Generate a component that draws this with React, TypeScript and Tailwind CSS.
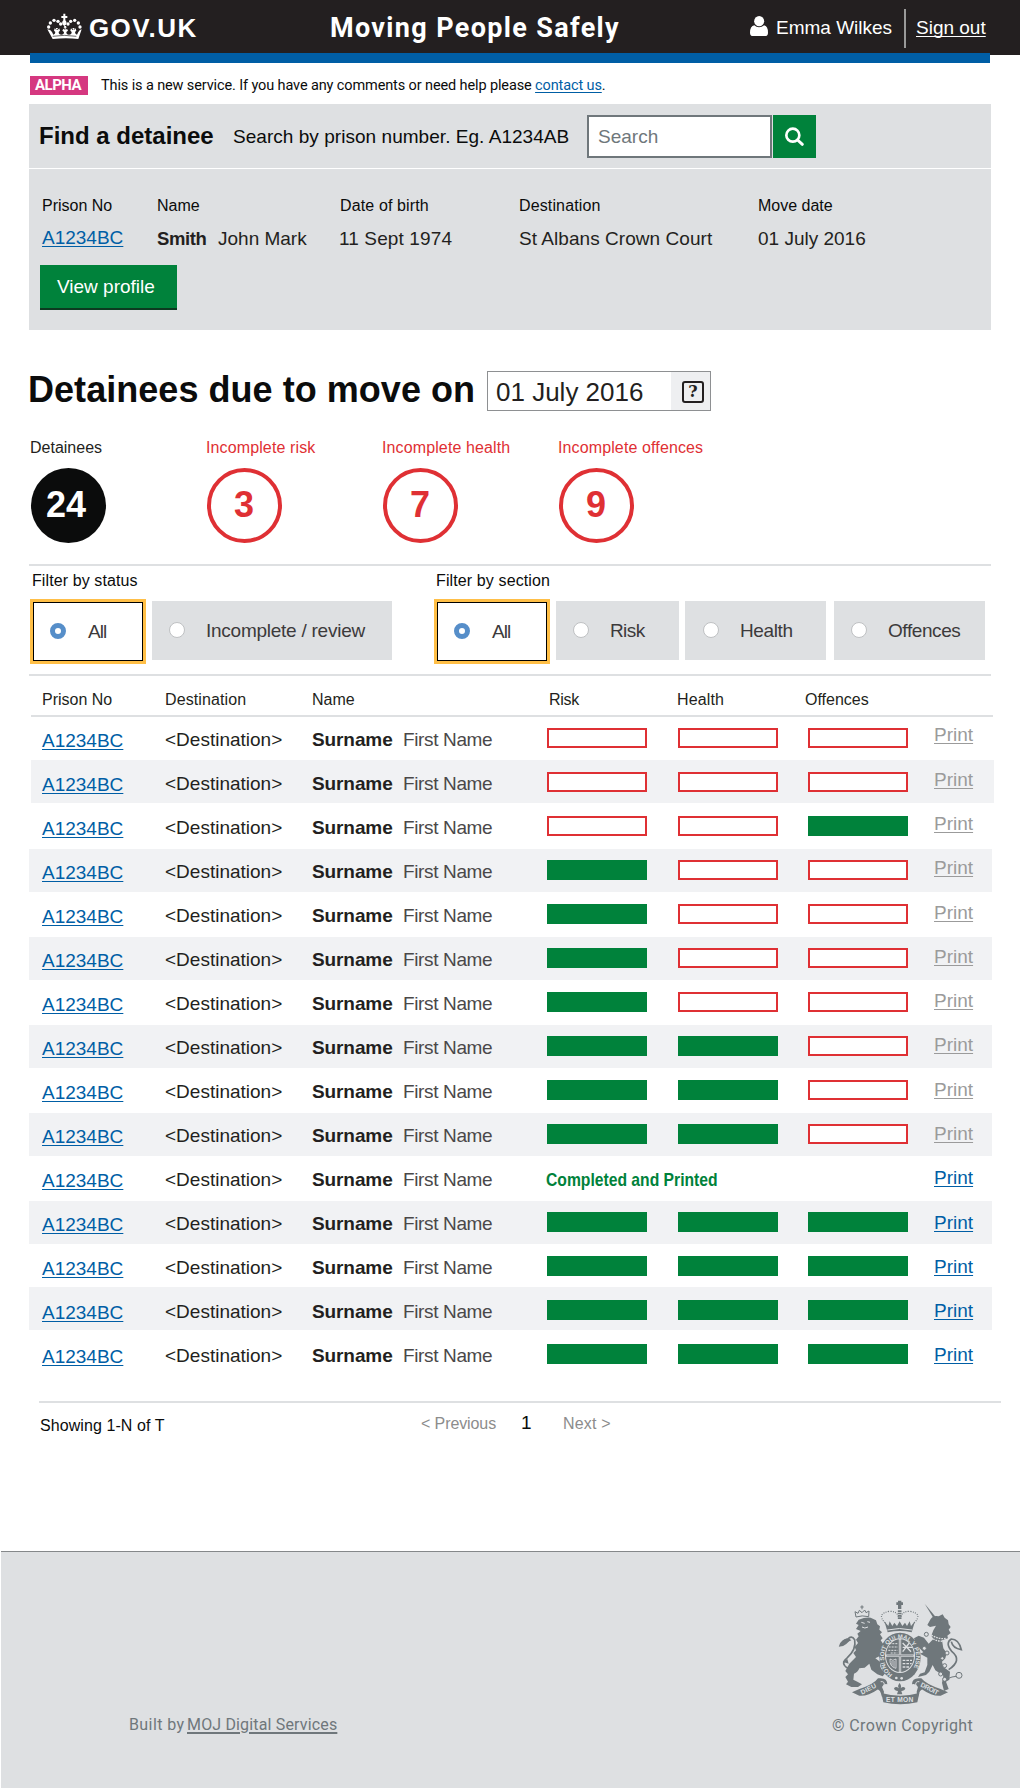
import type { ReactNode } from "react";

const GREEN_BAR = "h-5 w-[100px] bg-[#00823b]";
const RED_BAR = "h-5 w-[100px] border-2 border-[#df3034] bg-white";

const text16 = "text-[16px] leading-[17px] whitespace-pre";
const text19 = "text-[19px] leading-[21px] whitespace-pre";
const link = "text-[#005ea5] underline decoration-1 underline-offset-2";

function Crown() {
  return (
    <svg className="block h-[27px] w-9" viewBox="138 39 108 81" fill="#fff">
      <path d="M190 41h6v7h6v6h-6v7q6 5 2 13l-5 4-5-4q-4-8 2-13v-7h-6v-6h6z" />
      {[
        [146, 81],
        [151, 69],
        [162, 61],
        [174, 64],
        [182, 72],
      ].map(([x, y]) => (
        <g key={x}>
          <circle cx={x} cy={y} r="5" />
          <circle cx={386 - x} cy={y} r="5" />
        </g>
      ))}
      <path d="M142 88q10 0 14 8l4 8q6-2 6-8l-4-4 2-7 5 5h1l-3-6h7l-3 6h2l5-5 2 7-4 4q0 8 8 8t8-8l-5-4 3-6 4 4v-7h-3l2-5h5l2 5h-3v7l4-4 3 6-5 4q0 8 8 8t8-8l-4-4 2-7 5 5h2l-3-6h7l-3 6h1l5-5 2 7-4 4q0 6 6 8l4-8q4-8 10-8l-10 29q-36-5-77 0z" />
      <path d="M158 109q34-6 71 0" fill="none" stroke="#231f20" strokeWidth="2" />
    </svg>
  );
}

function UserIcon() {
  return (
    <svg className="block h-5 w-[18px]" viewBox="723 48 54 60" fill="#fff">
      <ellipse cx="750.5" cy="63.5" rx="15" ry="15.5" />
      <path d="M736 76Q723 79 723 98Q723 108 732 108H768Q777 108 777 98Q777 79 765 76Q759 82 750 82Q742 82 736 76Z" />
    </svg>
  );
}

function SearchIcon() {
  return (
    <svg className="block h-[21px] w-[21px]" viewBox="822 378 63 63" fill="none" stroke="#fff">
      <circle cx="848.5" cy="405.500" r="19.5" strokeWidth="8" />
      <path d="M863 420L877 433" strokeWidth="9" strokeLinecap="round" />
    </svg>
  );
}

function RoyalArms() {
  return (
    <svg className="block h-[108px] w-32" viewBox="55 25 384 324" fill="#6f777b">
      {/* lion */}
      <path d="M112 82l-3-16 9 5 4-9 8 7 8-8 4 8 9-5-1 17q-20-5-38 1z" fill="none" stroke="#6f777b" strokeWidth="3" />
      <path d="M130 47v12M125 52h10" stroke="#6f777b" strokeWidth="3" />
      <path d="M120 90Q140 82 156 84L172 92L176 104L184 110L182 120L190 128L184 134L192 146L186 152L194 164L188 172L200 188L196 200L186 212L182 200L170 206L184 216L184 228L188 238L200 250L192 260L176 254L158 240L152 222L138 234L122 236Q118 248 106 252L104 270L116 276L130 284L118 292L98 292L82 284L88 276L80 262L88 254L80 244L92 222L112 202L104 190L112 182L108 172L118 160L112 150L120 140L116 132L126 124L112 118L120 106L112 102Z" />
      <path d="M128 98l10 3M146 96l8 2M130 112q8 6 18 0" stroke="#dee0e2" strokeWidth="3" fill="none" />
      <path d="M88 236Q64 222 84 206Q114 180 108 150Q98 136 88 148Q70 150 64 168Q82 166 92 148" fill="none" stroke="#6f777b" strokeWidth="5" />
      <path d="M64 168Q74 146 90 146L98 152Q82 160 64 168ZM72 216L86 208L90 222Z" />
      {/* unicorn */}
      <path d="M318 42L353 84L346 88Z" />
      <path d="M326 106L336 88Q344 76 360 80L372 74L378 84L388 92L390 104L396 112L390 120L396 130L386 138L388 146L370 152L374 176L384 190L380 206L370 216L374 232L394 246L392 270L382 276L390 298L376 304L370 280L374 258L350 242L342 226L332 246L322 256L298 262L304 252L318 248L326 226L326 204L304 192L314 188L294 166L286 146L300 138L316 144L330 162L344 148L338 138L344 122L352 108L334 112Z" />
      <path d="M338 136q22 14 46 10M336 144q22 14 48 10" stroke="#dee0e2" strokeWidth="4" strokeDasharray="5 3" fill="none" />
      <path d="M390 240Q432 212 400 186Q378 160 398 148Q420 148 428 180Q402 176 398 156" fill="none" stroke="#6f777b" strokeWidth="5" />
      <g fill="#dee0e2" stroke="#6f777b" strokeWidth="3">
        <circle cx="323" cy="134" r="6" />
        <circle cx="317" cy="176" r="6" />
        <circle cx="385" cy="190" r="6" />
        <circle cx="371" cy="206" r="5" />
        <circle cx="378" cy="228" r="6" />
        <circle cx="366" cy="253" r="6" />
        <circle cx="378" cy="269" r="6" />
        <circle cx="421" cy="257" r="9" />
      </g>
      <path d="M384 268L400 262L412 260" stroke="#6f777b" strokeWidth="3" fill="none" />
      {/* crown */}
      <path d="M238 33h10v5h5v8h-5v12h-10V46h-5v-8h5z" />
      <path d="M200 100Q172 72 212 65Q236 64 240 84M286 100Q314 72 274 65Q250 64 246 84" fill="none" stroke="#6f777b" strokeWidth="3.500" strokeDasharray="3 4" />
      <path d="M243 62v28" stroke="#6f777b" strokeWidth="11" strokeDasharray="5 2" />
      <path d="M197 95l12 14 4-14 8 14 6-10 8 10 8-14 8 14 8-10 6 10 8-14 4 14 12-14-10 33q-34-8-72 0z" />
      <path d="M206 121q36-9 74 0" stroke="#dee0e2" strokeWidth="3" fill="none" />
      {/* garter and shield */}
      <ellipse cx="244" cy="202" rx="62" ry="73" />
      <ellipse cx="244" cy="198" rx="45" ry="52" fill="#dee0e2" />
      <ellipse cx="244" cy="198" rx="42" ry="49" />
      <g fill="none" stroke="#dee0e2">
        <path d="M244 148v100M201 198h86" strokeWidth="7" />
        <path d="M210 172h28M209 182h28M212 162h26M216 190h20" strokeWidth="3" strokeDasharray="6 3" />
        <path d="M252 212h28M252 222h27M252 232h22" strokeWidth="4" strokeDasharray="8 3" />
        <path d="M252 160l25 26M252 186l20-26M252 173h30" strokeWidth="4" />
        <path d="M214 208q-2 24 18 28V208q-10 8-18 0M220 214v14M226 214v18" strokeWidth="2.500" />
      </g>
      <path d="M244 150v96M204 198h80" stroke="#6f777b" strokeWidth="2" />
      <defs>
        <path id="garter" d="M222 254A48 57 0 1 1 274 248" />
      </defs>
      <text fill="#dee0e2" fontSize="18" fontWeight="700" fontFamily="Liberation Sans" textLength="256">
        <textPath href="#garter">HONI SOIT QUI MAL Y PENSE</textPath>
      </text>
      <circle cx="233" cy="265" r="4" fill="#dee0e2" />
      <circle cx="249" cy="266" r="4" fill="#dee0e2" />
      {/* motto ribbon */}
      <path d="M100 308L122 298Q166 284 178 266Q206 262 206 284Q196 280 190 292L196 306Q196 318 190 322Q184 298 176 300Q148 320 122 318ZM388 308L366 298Q322 284 308 266Q280 262 280 284Q290 280 298 292L294 306Q294 318 298 322Q304 298 312 300Q340 320 366 318Z" />
      <path d="M188 310Q244 326 302 310L296 338Q244 350 194 338Z" />
      <path d="M186 276q14-2 10 14M302 276q-14-2-10 14" stroke="#dee0e2" strokeWidth="3" fill="none" />
      <path d="M242 280q8 8 4 16 8-8 14 0-2 8-12 8l3 10h-16l3-10q-10 0-12-8 6-8 14 0-4-8 2-16z" />
      <g fill="#dee0e2" fontFamily="Liberation Sans" fontWeight="700" fontSize="20">
        <text x="130" y="315" textLength="50" transform="rotate(-27 130 315)">DIEU</text>
        <text x="202" y="338" textLength="82">ET MON</text>
        <text x="304" y="290" textLength="58" transform="rotate(27 304 290)">DROIT</text>
      </g>
    </svg>
  );
}

function Stat({ label, value, dark }: { label: string; value: string; dark?: boolean }) {
  return (
    <div className={dark ? "w-[176px]" : "w-44"}>
      <p className={`${text16} ${dark ? "text-[#231f20]" : "tracking-[0.12px] text-[#df3034]"}`}>{label}</p>
      <div
        className={`mt-3 flex h-[75px] w-[75px] justify-center rounded-full text-[36px] leading-[41px] font-bold ${
          dark ? "ml-px bg-[#0b0c0c] pt-4 pr-[5px] text-white" : "ml-px border-4 border-[#df3034] pt-3 pr-px text-[#df3034]"
        }`}
      >
        {value}
      </div>
    </div>
  );
}

function SelectedOption() {
  return (
    <div className="h-[65px] w-[116px] border-[3px] border-[#ffbf47]">
      <div className="flex h-full border border-black bg-white pt-[18px] pl-4">
        <span className="mt-[2px] h-4 w-4 rounded-full border-[5px] border-[#568ec9] bg-white" />
        <span className={`${text19} ml-[22px] tracking-[-0.9px] text-[#3c3a3b]`}>All</span>
      </div>
    </div>
  );
}

function Option({ box, label, children }: { box: string; label: string; children: ReactNode }) {
  return (
    <div className={`mt-0.5 flex h-[59px] bg-[#dee0e2] pt-[19px] ${box}`}>
      <span className="mt-0.5 h-4 w-4 shrink-0 rounded-full border border-[#bfc1c3] bg-white" />
      <span className={`${text19} text-[#3c3a3b] ${label}`}>{children}</span>
    </div>
  );
}

// One digit per section (risk, health, offences): 1 is complete, 0 is not.
const rows = ["000", "000", "001", "100", "100", "100", "100", "110", "110", "110", "printed", "111", "111", "111", "111"];

function stripe(i: number) {
  if (i % 2 === 0) return "h-11 ml-[29px] w-[963px] pl-[13px]";
  if (i === 1) return "h-11 ml-[31px] w-[963px] pl-[11px] bg-[#f1f2f4] border-b border-transparent bg-clip-padding";
  if (i === 13) return "-mt-px h-[45px] pt-px ml-[29px] w-[963px] pl-[13px] bg-[#f1f2f4] border-b-2 border-transparent bg-clip-padding";
  return "h-11 ml-[29px] w-[963px] pl-[13px] bg-[#f1f2f4] border-t border-transparent bg-clip-padding [&>*]:-translate-y-px";
}

function Row({ state, index }: { state: string; index: number }) {
  return (
    <div className={`flex items-start ${stripe(index)}`}>
      <a className={`${text19} ${link} mt-[14px] w-[123px]`}>A1234BC</a>
      <span className={`${text19} mt-[13px] w-[147px] text-[#231f20]`}>{"<Destination>"}</span>
      <span className={`${text19} mt-[13px] w-[91px] font-bold tracking-[-0.1px] text-[#231f20]`}>Surname</span>
      <span className={`${text19} mt-[13px] w-36 tracking-[-0.36px] text-[#4a4849]`}>First Name</span>
      {state === "printed" ? (
        <div className="mt-[13px] w-[387px]">
          <span className={`${text19} -ml-px inline-block origin-left scale-x-[0.825] font-bold text-[#00823b]`}>
            Completed and Printed
          </span>
        </div>
      ) : (
        <div className="mt-3 flex w-[387px]">
          <div className={state[0] === "1" ? GREEN_BAR : RED_BAR} />
          <div className={`ml-[31px] ${state[1] === "1" ? GREEN_BAR : RED_BAR}`} />
          <div className={`ml-[30px] ${state[2] === "1" ? GREEN_BAR : RED_BAR}`} />
        </div>
      )}
      <a
        className={`${text19} underline decoration-1 underline-offset-2 ${index < 10 ? "text-[#9b9b9b]" : "text-[#005ea5]"}`}
        style={{ marginTop: 8 + Math.ceil(index * 0.28) }}
      >
        Print
      </a>
    </div>
  );
}

export default function App() {
  return (
    <div className="h-[1788px] w-[1020px] overflow-hidden bg-white font-['Liberation_Sans',sans-serif] text-[#0b0c0c]">
      <header className="h-[55px] bg-[#231f20] text-white">
        <div className="flex h-[53px] items-start">
          <div className="mt-[13px] ml-[46px]">
            <Crown />
          </div>
          <span className="mt-[13px] ml-[7px] w-[241px] text-[26px] leading-[30px] font-bold tracking-[1.4px]">GOV.UK</span>
          <h1 className="mt-3 w-[420px] font-['Roboto',sans-serif] text-[27px] leading-8 font-bold tracking-[1.34px] whitespace-nowrap">
            Moving People Safely
          </h1>
          <div className="mt-4">
            <UserIcon />
          </div>
          <span className={`${text19} mt-[17px] ml-2 w-[128px]`}>Emma Wilkes</span>
          <span className="mt-[9px] h-[39px] w-0.5 bg-[#999]" />
          <a className={`${text19} mt-[17px] ml-[10px] underline decoration-1 underline-offset-2 [text-decoration-skip-ink:none]`}>
            Sign out
          </a>
        </div>
        <div className="mx-[30px] h-2.5 bg-[#005ea5]" />
      </header>

      <div className="mt-[21px] ml-[30px] flex h-[19px] font-['Roboto',sans-serif]">
        <span className="h-[19px] w-[58px] bg-[#d53880] pl-[5px] text-[15px] leading-[18px] font-bold tracking-[-0.5px] text-white">
          ALPHA
        </span>
        <p className="mt-px ml-[13px] text-[14.5px] leading-[17px] tracking-[-0.12px] whitespace-nowrap">
          This is a new service. If you have any comments or need help please <a className={link}>contact us</a>.
        </p>
      </div>

      <section className="mt-[9px] ml-[29px] h-[226px] w-[962px] bg-[#dee0e2]">
        <div className="flex h-[65px] items-start border-b border-white pl-[10px]">
          <h2 className="mt-[18px] w-[194px] text-[24px] leading-[27px] font-bold whitespace-nowrap">Find a detainee</h2>
          <span className={`${text19} mt-[22px] w-[354px] tracking-[0.04px]`}>Search by prison number. Eg. A1234AB</span>
          <div className="mt-[11px] flex h-[43px] w-[185px] border-2 border-[#6f777b] bg-white pt-[9px] pl-[9px]">
            <span className={`${text19} text-[#6f777b]`}>Search</span>
          </div>
          <button className="mt-[11px] ml-px h-[43px] w-[43px] bg-[#00823b] pl-[11px]">
            <SearchIcon />
          </button>
        </div>
        <div className={`${text16} mt-7 ml-[13px] flex`}>
          <span className="w-[115px]">Prison No</span>
          <span className="w-[183px]">Name</span>
          <span className="w-[179px] tracking-[0.13px]">Date of birth</span>
          <span className="w-[239px] tracking-[0.13px]">Destination</span>
          <span>Move date</span>
        </div>
        <div className={`${text19} mt-[13px] ml-[13px] flex items-start text-[#231f20]`}>
          <a className={`w-[115px] ${link}`}>A1234BC</a>
          <span className="mt-px w-[61px] text-[18.5px] font-bold tracking-[-0.4px]">Smith</span>
          <span className="mt-px w-[121px]">John Mark</span>
          <span className="mt-px w-[180px] tracking-[0.12px]">11 Sept 1974</span>
          <span className="mt-px w-[239px] tracking-[0.05px]">St Albans Crown Court</span>
          <span className="mt-px">01 July 2016</span>
        </div>
        <button
          className={`${text19} mt-4 ml-[11px] block h-[45px] w-[137px] border-b-2 border-[#0c3a20] bg-[#00823b] py-1 pl-[17px] text-left text-white`}
        >
          View profile
        </button>
      </section>

      <div className="mt-[39px] ml-7 flex items-start">
        <h2 className="w-[459px] text-[36px] leading-[41px] font-bold tracking-[0.04px] whitespace-nowrap">
          Detainees due to move on
        </h2>
        <div className="mt-0.5 flex h-10 w-[224px] border border-[#8e9092]">
          <span className="mt-[5px] ml-2 w-[175px] text-[26px] leading-[30px] whitespace-nowrap text-[#231f20]">01 July 2016</span>
          <div className="flex w-[39px] bg-[#eeeff1] pt-[9px] pl-[11px]">
            <span className="flex h-[22px] w-[22px] items-center justify-center rounded-[3px] border-2 border-[#231f20] font-['DejaVu_Serif',serif] text-[16px] leading-[18px] font-bold text-[#231f20]">
              ?
            </span>
          </div>
        </div>
      </div>

      <div className="mt-7 ml-[30px] flex">
        <Stat label="Detainees" value="24" dark />
        <Stat label="Incomplete risk" value="3" />
        <Stat label="Incomplete health" value="7" />
        <Stat label="Incomplete offences" value="9" />
      </div>

      <section className="mt-[21px] ml-[29px] h-28 w-[962px] border-y-2 border-[#dee0e2]">
        <div className="mt-[6px] ml-[3px] flex">
          <span className={`${text16} w-[404px] tracking-[0.1px]`}>Filter by status</span>
          <span className={`${text16} tracking-[0.12px]`}>Filter by section</span>
        </div>
        <div className="mt-[10px] ml-px flex">
          <SelectedOption />
          <Option box="ml-1.5 w-[240px] pl-[17px]" label="ml-[21px] tracking-[-0.25px]">
            Incomplete / review
          </Option>
          <div className="w-[42px]" />
          <SelectedOption />
          <Option box="ml-1.5 w-[123px] pl-[17px]" label="ml-[21px] tracking-[-0.6px]">
            Risk
          </Option>
          <Option box="ml-1.5 w-[141px] pl-[18px]" label="ml-[21px] tracking-[-0.37px]">
            Health
          </Option>
          <Option box="ml-2 w-[151px] pl-[17px]" label="ml-[21px] tracking-[-0.41px]">
            Offences
          </Option>
        </div>
      </section>

      <div className={`${text16} ml-[31px] flex h-[41px] w-[962px] border-b-2 border-[#dee0e2] pt-[15px] pl-[11px] text-[#231f20]`}>
        <span className="w-[123px]">Prison No</span>
        <span className="w-[147px] tracking-[0.1px]">Destination</span>
        <span className="w-[237px]">Name</span>
        <span className="w-[128px] tracking-[-0.3px]">Risk</span>
        <span className="w-[128px] tracking-[0.13px]">Health</span>
        <span>Offences</span>
      </div>
      <div className="-mt-px">
        {rows.map((state, i) => (
          <Row key={i} state={state} index={i} />
        ))}
      </div>

      <div className="mt-[25px] ml-[39px] h-0.5 w-[962px] bg-[#dee0e2]" />
      <div className={`${text16} ml-10 flex h-[148px] items-start`}>
        <span className="mt-[14px] w-[381px] tracking-[0.08px]">Showing 1-N of T</span>
        <span className="mt-3 w-[100px] tracking-[-0.1px] text-[#8c8c8c]">{"< Previous"}</span>
        <span className={`${text19} mt-[9px] w-[42px]`}>1</span>
        <span className="mt-3 tracking-[0.2px] text-[#8c8c8c]">{"Next >"}</span>
      </div>

      <footer className="ml-px flex h-[237px] items-start border-t border-[#85888a] bg-[#dee0e2] font-['Roboto',sans-serif] text-[16px] leading-[19px] whitespace-nowrap text-[#6f777b]">
        <p className="mt-[163px] ml-[128px] w-[703px] tracking-[0.16px]">
          <span className="inline-block w-[58px] tracking-[0.4px]">Built by</span>
          <a className="underline decoration-2 underline-offset-2">MOJ Digital Services</a>
        </p>
        <div className="mt-[46px]">
          <div className="ml-[5px]">
            <RoyalArms />
          </div>
          <p className="mt-[10px] tracking-[0.39px]">© Crown Copyright</p>
        </div>
      </footer>
    </div>
  );
}
